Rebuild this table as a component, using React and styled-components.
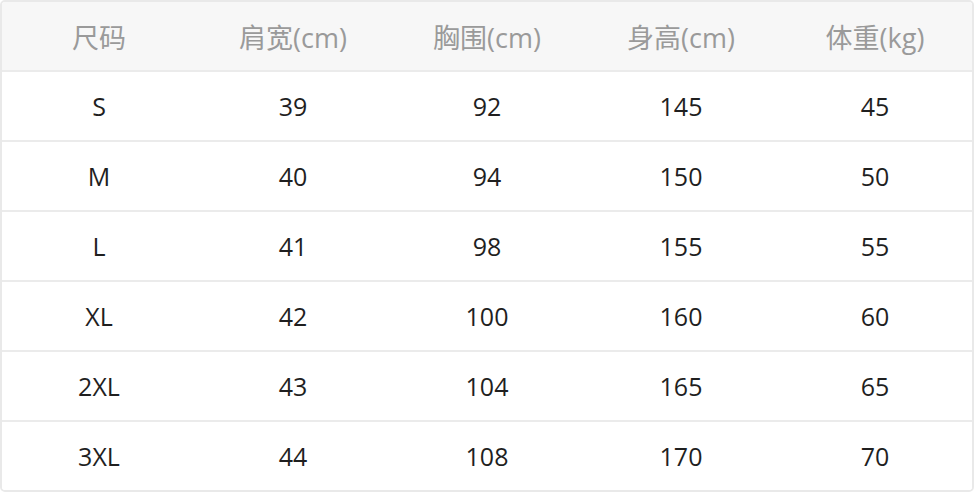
import styled, { createGlobalStyle } from "styled-components";

const GlobalStyle = createGlobalStyle`
  html, body {
    margin: 0;
    padding: 0;
    background: #fff;
  }
  body {
    font-family: "Open Sans", "Noto Sans CJK SC", sans-serif;
  }
`;

const Table = styled.div`
  width: 974px;
  height: 492px;
  box-sizing: border-box;
  border: 2px solid #e9e9e9;
  border-radius: 5px;
  overflow: hidden;
  display: flex;
  flex-direction: column;
`;

const Row = styled.div`
  display: grid;
  grid-template-columns: repeat(5, 1fr);
  height: ${(p) => (p.$head ? "68px" : "70px")};
  box-sizing: border-box;
  background: ${(p) => (p.$head ? "#f7f7f7" : "#fff")};
  border-top: ${(p) => (p.$head ? "none" : "2px solid #ebebeb")};
`;

const Cell = styled.div`
  display: flex;
  align-items: center;
  justify-content: center;
  font-size: ${(p) => (p.$head ? "27px" : "25px")};
  color: ${(p) => (p.$head ? "#9a9a9a" : "#1f1f1f")};
`;

const heads = ["尺码", "肩宽(cm)", "胸围(cm)", "身高(cm)", "体重(kg)"];

const rows = [
  ["S", "39", "92", "145", "45"],
  ["M", "40", "94", "150", "50"],
  ["L", "41", "98", "155", "55"],
  ["XL", "42", "100", "160", "60"],
  ["2XL", "43", "104", "165", "65"],
  ["3XL", "44", "108", "170", "70"],
];

export default function App() {
  return (
    <>
      <GlobalStyle />
      <Table>
        <Row $head>
          {heads.map((h) => (
            <Cell $head key={h}>{h}</Cell>
          ))}
        </Row>
        {rows.map((r) => (
          <Row key={r[0]}>
            {r.map((v, i) => (
              <Cell key={i}>{v}</Cell>
            ))}
          </Row>
        ))}
      </Table>
    </>
  );
}
